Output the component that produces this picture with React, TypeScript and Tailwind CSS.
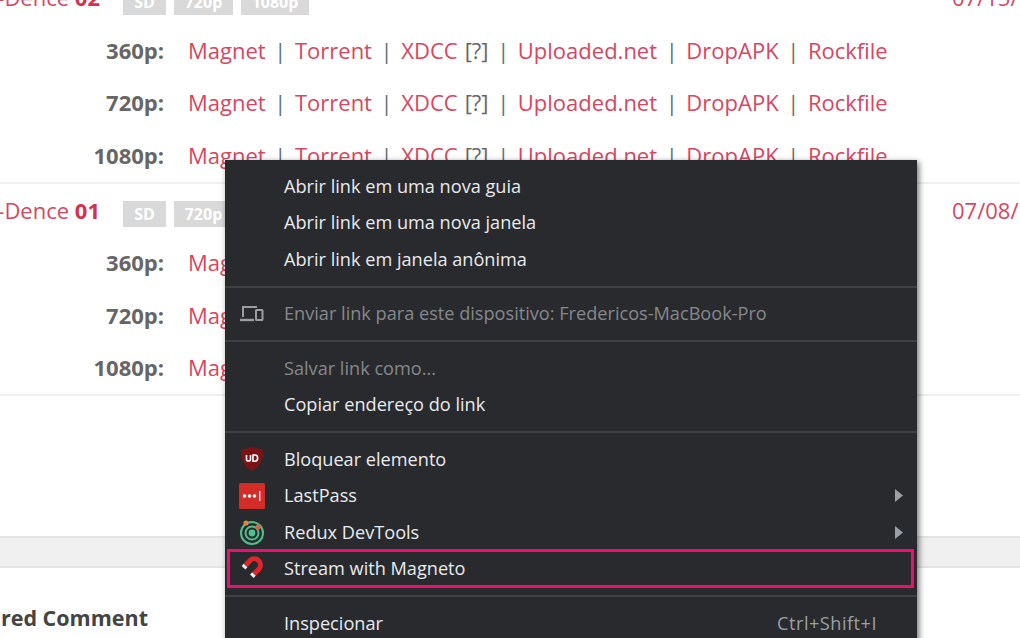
const sans = "font-['Open_Sans',sans-serif]";

function Sep() {
  return <span className="text-[#66707c] mx-[8.6px] font-normal">|</span>;
}

function LinkRow({ q }: { q: string }) {
  return (
    <div className="flex items-center h-[52.5px] text-[22px] whitespace-nowrap">
      <span className="w-[164px] shrink-0 text-right font-bold text-[#666666]">{q}</span>
      <div className="ml-[24px] flex items-center text-[#d9465f]">
        <span>Magnet</span>
        <Sep />
        <span>Torrent</span>
        <Sep />
        <span>XDCC</span>
        <span className="text-[#666666] ml-[7px]">[?]</span>
        <Sep />
        <span>Uploaded.net</span>
        <Sep />
        <span>DropAPK</span>
        <Sep />
        <span>Rockfile</span>
      </div>
    </div>
  );
}

function Badge({ children, w }: { children: string; w: string }) {
  return (
    <span className={`${w} h-[26px] flex items-center justify-center bg-[#d9d9d9] text-white font-bold text-[16px]`}>
      {children}
    </span>
  );
}

function Episode({ n, date }: { n: string; date: string }) {
  return (
    <div className="flex items-center h-[53px] text-[22px] whitespace-nowrap relative">
      <div className="w-[100px] shrink-0 flex justify-end overflow-hidden text-[#d9465f]">
        <span>-Dence&nbsp;<b className="text-[#d7304f]">{n}</b></span>
      </div>
      <div className="ml-[23px] mt-[8px] flex gap-[8px]">
        <Badge w="w-[43px]">SD</Badge>
        <Badge w="w-[59px]">720p</Badge>
        <Badge w="w-[68px]">1080p</Badge>
      </div>
      <span className="ml-auto w-[68px] overflow-hidden text-[#d9465f]">{date}</span>
    </div>
  );
}

function Item({
  children,
  icon,
  disabled,
  arrow,
  shortcut,
}: {
  children: string;
  icon?: React.ReactNode;
  disabled?: boolean;
  arrow?: boolean;
  shortcut?: string;
}) {
  return (
    <div className={`flex items-center h-[36.5px] text-[18.15px] whitespace-nowrap ${disabled ? "text-[#85888c]" : "text-[#e8eaed]"}`}>
      <span className="w-[59px] shrink-0 flex justify-center pr-[6px]">{icon}</span>
      <span>{children}</span>
      {shortcut && <span className="ml-auto mr-[40px] tracking-[0.5px] text-[#9aa0a6]">{shortcut}</span>}
      {arrow && (
        <svg className="ml-auto mr-[14px]" width="8" height="13" viewBox="0 0 8 13">
          <path d="M0 0L8 6.5L0 13Z" fill="#9aa0a6" />
        </svg>
      )}
    </div>
  );
}

function Divider() {
  return <div className="h-[2px] bg-[#3f4043] my-[8px]" />;
}

function Device() {
  return (
    <svg width="25" height="18" viewBox="0 0 25 18" fill="none">
      <path d="M4 12V2H18" stroke="#9a9ea3" strokeWidth="2" />
      <path d="M1 15H15" stroke="#9a9ea3" strokeWidth="2.4" />
      <rect x="17" y="5" width="6.5" height="10" stroke="#9a9ea3" strokeWidth="2" rx="0.5" />
    </svg>
  );
}

function UBlock() {
  return (
    <svg width="24" height="26" viewBox="0 0 24 26">
      <path d="M12 1L23 4C23 14 20 21 12 25C4 21 1 14 1 4Z" fill="#7d1214" />
      <path d="M6.5 9V13.5C6.5 15.5 10.5 15.5 10.5 13.5V9" fill="none" stroke="#fff" strokeWidth="1.6" />
      <path d="M13 9V15.2H15C18.5 15.2 18.5 9 15 9Z" fill="none" stroke="#fff" strokeWidth="1.6" />
    </svg>
  );
}

function LastPass() {
  return (
    <svg width="26" height="26" viewBox="0 0 26 26">
      <rect width="26" height="26" rx="1.5" fill="#d32d27" />
      <circle cx="5.5" cy="13" r="1.8" fill="#fff" />
      <circle cx="10.5" cy="13" r="1.8" fill="#fff" />
      <circle cx="15.5" cy="13" r="1.8" fill="#fff" />
      <rect x="20" y="8" width="1.4" height="10" fill="#fff" />
    </svg>
  );
}

function Redux() {
  return (
    <svg width="26" height="26" viewBox="0 0 26 26" fill="none">
      <circle cx="13" cy="14" r="11" stroke="#4fc08d" strokeWidth="2" />
      <circle cx="13" cy="14" r="6.5" stroke="#4fc08d" strokeWidth="2" />
      <circle cx="13" cy="14" r="3.4" fill="#4fc08d" />
      <circle cx="7" cy="4" r="2.6" fill="#e0813c" />
      <circle cx="19" cy="8" r="2.6" fill="#d9633a" />
    </svg>
  );
}

function Magneto() {
  return (
    <svg width="24" height="26" viewBox="0 0 24 26" fill="none">
      <path d="M5.5 9.5L10 4.5A6.2 6.2 0 0 1 19 13L14 18" stroke="#e0262b" strokeWidth="5" />
      <path d="M5.5 9.5L3.5 11.7" stroke="#ececec" strokeWidth="5" />
      <path d="M14 18L11.8 20.2" stroke="#ececec" strokeWidth="5" />
    </svg>
  );
}

export default function App() {
  return (
    <div className={`relative w-[1020px] h-[638px] overflow-hidden bg-white ${sans}`}>
      <div className="flex flex-col mt-[-29px] w-[1020px]">
        <Episode n="02" date="07/15/" />
        <LinkRow q="360p:" />
        <LinkRow q="720p:" />
        <LinkRow q="1080p:" />
        <div className="border-t-2 border-[#f0f0f0]" />
        <Episode n="01" date="07/08/" />
        <LinkRow q="360p:" />
        <LinkRow q="720p:" />
        <LinkRow q="1080p:" />
        <div className="border-t-2 border-[#f0f0f0]" />
        <div className="h-[140px]" />
        <div className="h-[32px] bg-[#f0f0f0] border-t-2 border-b-2 border-[#e4e4e4]" />
        <div className="h-[34px]" />
        <div className="flex justify-end w-[148px] overflow-hidden text-[21.5px] font-bold text-[#444444] whitespace-nowrap">
          <span>Featured Comment</span>
        </div>
      </div>

      <div className="absolute left-[225px] top-[160px] w-[692px] h-[490px] bg-[#292a2d] shadow-[2px_2px_6px_rgba(0,0,0,0.55)] pt-[8px]">
        <Item>Abrir link em uma nova guia</Item>
        <Item>Abrir link em uma nova janela</Item>
        <Item>Abrir link em janela anônima</Item>
        <Divider />
        <Item disabled icon={<Device />}>Enviar link para este dispositivo: Fredericos-MacBook-Pro</Item>
        <Divider />
        <Item disabled>Salvar link como...</Item>
        <Item>Copiar endereço do link</Item>
        <Divider />
        <Item icon={<UBlock />}>Bloquear elemento</Item>
        <Item arrow icon={<LastPass />}>LastPass</Item>
        <Item arrow icon={<Redux />}>Redux DevTools</Item>
        <Item icon={<Magneto />}>Stream with Magneto</Item>
        <Divider />
        <Item shortcut="Ctrl+Shift+I">Inspecionar</Item>
        <div className="absolute left-[2px] top-[389px] w-[687px] h-[39px] border-[3px] border-[#ec0f6f]" />
      </div>
    </div>
  );
}
